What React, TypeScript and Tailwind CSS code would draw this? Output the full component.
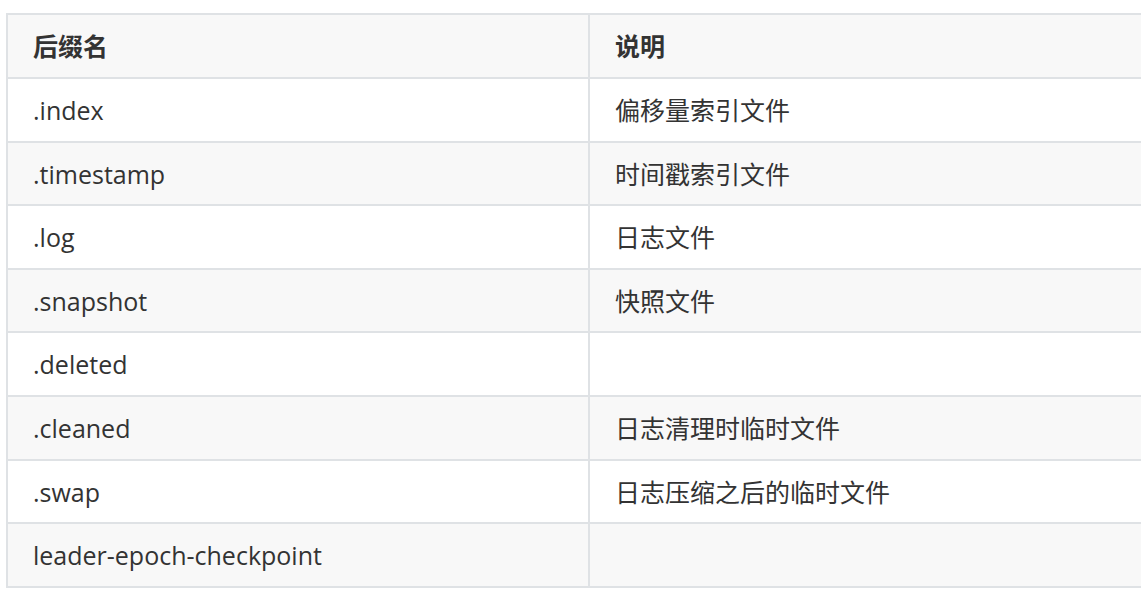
import React from "react";

const rows: [string, string][] = [
  [".index", "偏移量索引文件"],
  [".timestamp", "时间戳索引文件"],
  [".log", "日志文件"],
  [".snapshot", "快照文件"],
  [".deleted", ""],
  [".cleaned", "日志清理时临时文件"],
  [".swap", "日志压缩之后的临时文件"],
  ["leader-epoch-checkpoint", ""],
];

export default function App() {
  return (
    <div
      className="w-[1141px] h-[613px] bg-white overflow-hidden pt-[13px] pl-[6px] text-[#333333]"
      style={{ fontFamily: '"Open Sans", "Noto Sans CJK SC", sans-serif' }}
    >
      <div className="w-[1200px] border-l-2 border-t-2 border-[#dfe2e5] text-[25px]">
        <div className="flex h-[64px] border-b-2 border-[#dfe2e5] bg-[#f8f8f8] font-bold">
          <div className="w-[582px] shrink-0 border-r-2 border-[#dfe2e5] flex items-center pl-[25px] pt-[2px]">
            后缀名
          </div>
          <div className="flex-1 flex items-center pl-[25px] pt-[2px]">说明</div>
        </div>
        {rows.map(([a, b], i) => (
          <div
            key={a}
            className={`flex h-[63.6px] border-b-2 border-[#dfe2e5] ${
              i % 2 === 1 ? "bg-[#f8f8f8]" : "bg-white"
            }`}
          >
            <div className="w-[582px] shrink-0 border-r-2 border-[#dfe2e5] flex items-center pl-[25px] pt-[2px]">
              {a}
            </div>
            <div className="flex-1 flex items-center pl-[25px] pt-[2px]">{b}</div>
          </div>
        ))}
      </div>
    </div>
  );
}
